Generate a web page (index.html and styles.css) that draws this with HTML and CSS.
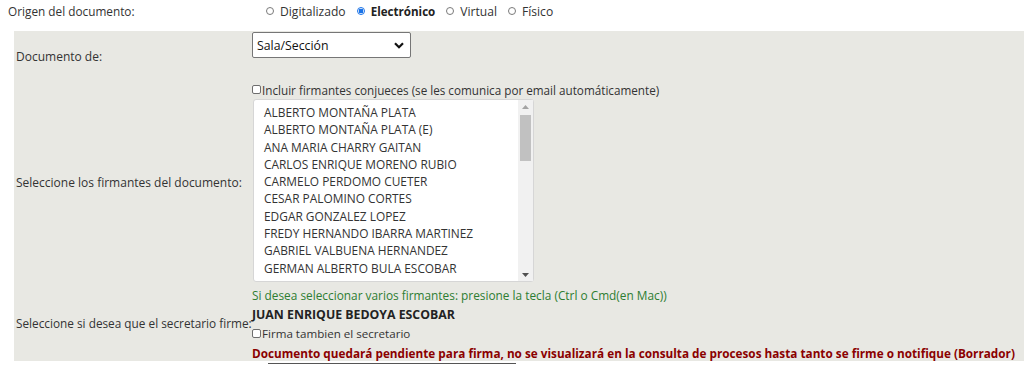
FILE: index.html
```html
<!DOCTYPE html>
<html lang="es">
<head>
<meta charset="utf-8">
<title>Documento</title>
<link rel="stylesheet" href="styles.css">
</head>
<body>
<div class="origin-row">
  <div class="origin-label">Origen del documento:</div>
  <div class="radios">
    <label class="radio"><span class="dot"></span>Digitalizado</label>
    <label class="radio checked"><span class="dot"></span>Electrónico</label>
    <label class="radio"><span class="dot"></span>Virtual</label>
    <label class="radio"><span class="dot"></span>Físico</label>
  </div>
</div>

<div class="panel">
  <div class="label row1">Documento de:</div>
  <div class="value row1">
    <div class="select">
      <span>Sala/Sección</span>
      <svg class="chev" width="10" height="7" viewBox="0 0 10 7"><path d="M1 1.2 L5 5.2 L9 1.2" fill="none" stroke="#111" stroke-width="2.2"/></svg>
    </div>
  </div>

  <div class="label row2">Seleccione los firmantes del documento:</div>
  <div class="value row2">
    <div class="check-line"><span class="box"></span>Incluir firmantes conjueces (se les comunica por email automáticamente)</div>
    <div class="listbox">
      <div class="items">
        <div>ALBERTO MONTAÑA PLATA</div>
        <div>ALBERTO MONTAÑA PLATA (E)</div>
        <div>ANA MARIA CHARRY GAITAN</div>
        <div>CARLOS ENRIQUE MORENO RUBIO</div>
        <div>CARMELO PERDOMO CUETER</div>
        <div>CESAR PALOMINO CORTES</div>
        <div>EDGAR GONZALEZ LOPEZ</div>
        <div>FREDY HERNANDO IBARRA MARTINEZ</div>
        <div>GABRIEL VALBUENA HERNANDEZ</div>
        <div>GERMAN ALBERTO BULA ESCOBAR</div>
      </div>
      <div class="scrollbar">
        <svg class="arrow" width="7" height="4" viewBox="0 0 7 4"><path d="M0 4 L3.5 0 L7 4 Z" fill="#a3a3a3"/></svg>
        <div class="track"><div class="thumb"></div></div>
        <svg class="arrow" width="7" height="4" viewBox="0 0 7 4"><path d="M0 0 L3.5 4 L7 0 Z" fill="#505050"/></svg>
      </div>
    </div>
  </div>

  <div class="label row3 tight">Seleccione si desea que el secretario firme:</div>
  <div class="value row3">
    <div class="hint">Si desea seleccionar varios firmantes: presione la tecla (Ctrl o Cmd(en Mac))</div>
    <div class="secretary">JUAN ENRIQUE BEDOYA ESCOBAR</div>
    <div class="check-line small"><span class="box"></span>Firma tambien el secretario</div>
    <div class="warning">Documento quedará pendiente para firma, no se visualizará en la consulta de procesos hasta tanto se firme o notifique (Borrador)</div>
  </div>
</div>
<div class="next-row"><div class="next-field"></div></div>
</body>
</html>
```
FILE: styles.css
```css
html, body {
  margin: 0;
  padding: 0;
  background: #ffffff;
}
body {
  font-family: "Open Sans", "Liberation Sans", sans-serif;
  font-size: 12px;
  color: #333333;
  overflow: hidden;
}

.origin-row {
  display: flex;
  align-items: center;
  height: 22px;
  padding-left: 8px;
}
.origin-label {
  width: 258px;
  font-size: 11.8px;
}
.radios {
  display: flex;
  align-items: center;
  font-size: 12.1px;
}
.radio {
  display: flex;
  align-items: center;
  margin-right: 11px;
}
.radio .dot {
  width: 8px;
  height: 8px;
  border: 1px solid #7a7a7a;
  border-radius: 50%;
  margin-right: 6px;
  box-sizing: border-box;
  background: #fff;
}
.radio.checked {
  font-weight: 700;
  color: #222;
  font-size: 11.6px;
}
.radio.checked .dot {
  border: 1px solid #1a73e8;
  background: radial-gradient(circle, #1a73e8 0 2.2px, #fff 2.6px);
}

.panel {
  margin: 9px 0 0 14px;
  background: #e8e8e3;
  display: grid;
  grid-template-columns: 238px 1fr;
  padding-top: 1px;
}
.label {
  align-self: center;
  padding-left: 2px;
  font-size: 12px;
  white-space: nowrap;
}
.label.tight {
  font-size: 11.8px;
}
.row1.value {
  height: 49px;
}
.row2.value {
  height: 203px;
}

.select {
  width: 159px;
  height: 26px;
  box-sizing: border-box;
  border: 1px solid #767676;
  border-radius: 2px;
  background: #fff;
  display: flex;
  align-items: center;
  justify-content: space-between;
  padding: 0 6px 0 4px;
  font-size: 12.3px;
  color: #111;
}

.check-line {
  display: flex;
  align-items: center;
  height: 17px;
  font-size: 11.7px;
  white-space: nowrap;
}
.box {
  width: 9px;
  height: 9px;
  box-sizing: border-box;
  border: 1px solid #6e6e6e;
  border-radius: 2px;
  background: #fff;
  margin-right: 1px;
}

.listbox {
  margin: 1px 0 0 1px;
  width: 281px;
  height: 183px;
  box-sizing: border-box;
  border: 1px solid #d6d6d6;
  border-radius: 3px;
  background: #fff;
  display: flex;
}
.items {
  flex: 1;
  padding: 4px 0 0 10px;
  font-size: 11.9px;
  line-height: 17.3px;
  color: #333;
}
.scrollbar {
  width: 15px;
  background: #f1f1f1;
  display: flex;
  flex-direction: column;
  align-items: center;
  padding: 5px 0 4px;
}
.arrow {
  flex: none;
}
.track {
  flex: 1;
  width: 100%;
  padding: 6px 2px 0;
  box-sizing: border-box;
}
.thumb {
  height: 46px;
  background: #c1c1c1;
}

.row3.value {
  padding-top: 3px;
  height: 74px;
}
.hint {
  color: #2e7d32;
  font-size: 11.85px;
  height: 19px;
  line-height: 17px;
  white-space: nowrap;
}
.secretary {
  font-weight: 700;
  font-size: 12.3px;
  color: #222;
  height: 18px;
  line-height: 18px;
}
.check-line.small {
  font-size: 11.6px;
  height: 19px;
}
.warning {
  color: #8b0000;
  font-weight: 700;
  font-size: 11.75px;
  line-height: 20px;
  white-space: nowrap;
}

.next-row {
  padding: 2px 0 0 268px;
}
.next-field {
  width: 248px;
  height: 6px;
  border-top: 1px solid #555;
}
```
